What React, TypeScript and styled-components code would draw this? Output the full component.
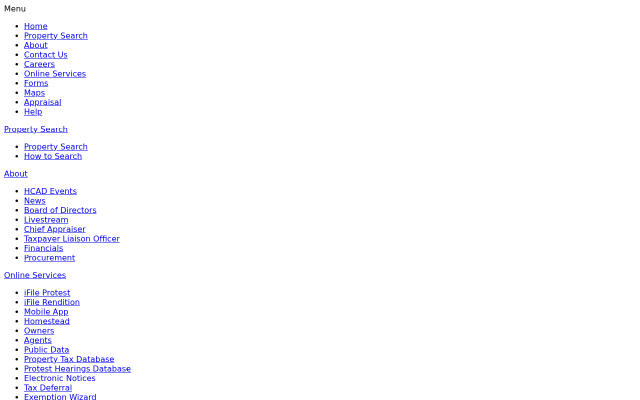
import React from "react";
import styled, { createGlobalStyle } from "styled-components";

const GlobalStyle = createGlobalStyle`
  html, body {
    background: #ffffff;
    overflow: hidden;
  }
  body {
    margin: 0;
    font-family: "DejaVu Sans", sans-serif;
    color: #000000;
  }
`;

/* the page is shown at 50% zoom, so it is laid out at full size and scaled */
const StyledViewport = styled.div`
  width: 1280px;
  padding: 8px;
  box-sizing: border-box;
  font-size: 16px;
  line-height: 19px;
  transform: scale(0.5);
  transform-origin: 0 0;
  will-change: transform;
`;

const StyledNav = styled.nav`
  display: block;
`;

const StyledLabel = styled.div`
  color: #000000;
`;

const StyledHeading = styled.div`
  display: block;
`;

const StyledList = styled.ul`
  margin: 16px 0;
  padding-left: 40px;
  list-style: disc;
`;

const StyledItem = styled.li`
  line-height: 19px;
`;

const StyledLink = styled.a`
  color: #0000ee;
  text-decoration: underline;
  cursor: pointer;
`;

type Section = {
  title?: string;
  links: string[];
};

const sections: Section[] = [
  {
    links: [
      "Home",
      "Property Search",
      "About",
      "Contact Us",
      "Careers",
      "Online Services",
      "Forms",
      "Maps",
      "Appraisal",
      "Help",
    ],
  },
  {
    title: "Property Search",
    links: ["Property Search", "How to Search"],
  },
  {
    title: "About",
    links: [
      "HCAD Events",
      "News",
      "Board of Directors",
      "Livestream",
      "Chief Appraiser",
      "Taxpayer Liaison Officer",
      "Financials",
      "Procurement",
    ],
  },
  {
    title: "Online Services",
    links: [
      "iFile Protest",
      "iFile Rendition",
      "Mobile App",
      "Homestead",
      "Owners",
      "Agents",
      "Public Data",
      "Property Tax Database",
      "Protest Hearings Database",
      "Electronic Notices",
      "Tax Deferral",
      "Exemption Wizard",
    ],
  },
];

function App() {
  return (
    <>
      <GlobalStyle />
      <StyledViewport>
        <StyledNav>
          <StyledLabel>Menu</StyledLabel>
          {sections.map((section, i) => (
            <React.Fragment key={i}>
              {section.title && (
                <StyledHeading>
                  <StyledLink href="#">{section.title}</StyledLink>
                </StyledHeading>
              )}
              <StyledList>
                {section.links.map((link) => (
                  <StyledItem key={link}>
                    <StyledLink href="#">{link}</StyledLink>
                  </StyledItem>
                ))}
              </StyledList>
            </React.Fragment>
          ))}
        </StyledNav>
      </StyledViewport>
    </>
  );
}

export default App;
